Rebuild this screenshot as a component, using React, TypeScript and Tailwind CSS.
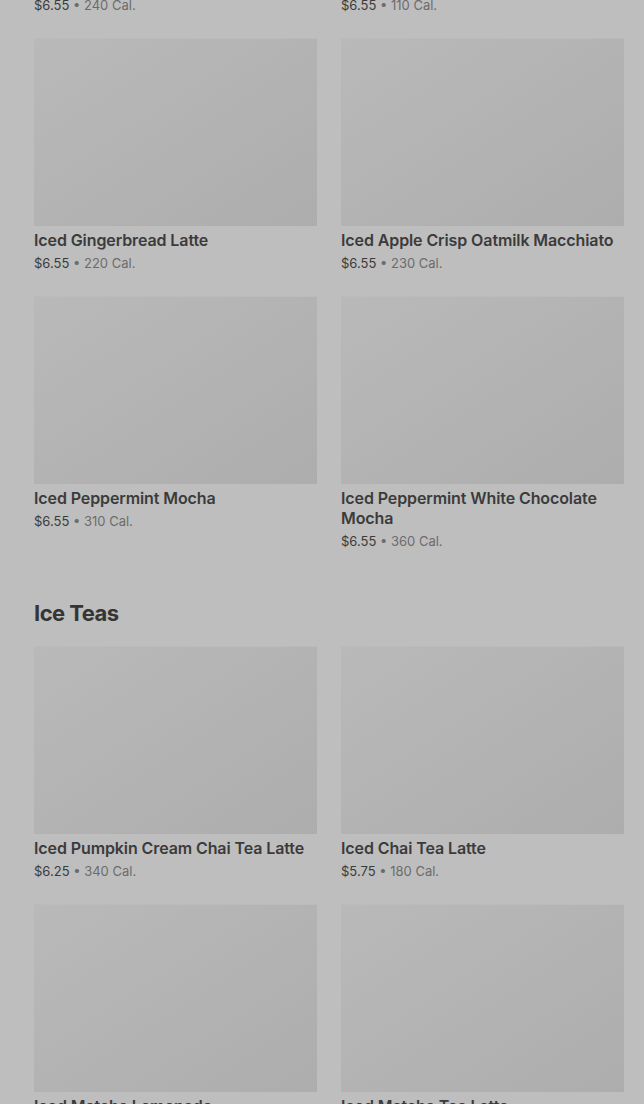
type Item = { name: string; price: string; cal: string };

const seasonal: Item[] = [
  { name: 'Iced Pumpkin Spice Latte', price: '$6.55', cal: '240 Cal.' },
  { name: 'Iced Caramel Brulée Latte', price: '$6.55', cal: '110 Cal.' },
  { name: 'Iced Gingerbread Latte', price: '$6.55', cal: '220 Cal.' },
  { name: 'Iced Apple Crisp Oatmilk Macchiato', price: '$6.55', cal: '230 Cal.' },
  { name: 'Iced Peppermint Mocha', price: '$6.55', cal: '310 Cal.' },
  { name: 'Iced Peppermint White Chocolate Mocha', price: '$6.55', cal: '360 Cal.' },
];

const teas: Item[] = [
  { name: 'Iced Pumpkin Cream Chai Tea Latte', price: '$6.25', cal: '340 Cal.' },
  { name: 'Iced Chai Tea Latte', price: '$5.75', cal: '180 Cal.' },
  { name: 'Iced Matcha Lemonade', price: '$5.25', cal: '100 Cal.' },
  { name: 'Iced Matcha Tea Latte', price: '$5.75', cal: '200 Cal.' },
];

function Card({ item }: { item: Item }) {
  return (
    <div>
      <div className="h-[188px] border-t border-[#bbbbbb] bg-gradient-to-br from-[#b9b9b9] to-[#adadad]" />
      <div className="mt-1 text-[16px] leading-5 font-semibold tracking-[-0.1px] text-[#3b3b3b]">{item.name}</div>
      <div className="mt-1 text-[13px] leading-[18px] text-[#3b3b3b]">
        {item.price}
        <span className="text-[#6c6c6c]"> • {item.cal}</span>
      </div>
    </div>
  );
}

export default function App() {
  return (
    <div
      className="h-[1104px] overflow-hidden bg-[#bebebe] pl-[34px] pr-[20px]"
      style={{ fontFamily: 'Inter, "Noto Sans", sans-serif' }}
    >
      {/* scrolled: previous row sits above the viewport */}
      <div className="mt-[-220px]">
        <div className="grid grid-cols-2 gap-x-6 gap-y-6">
          {seasonal.map((item) => (
            <Card key={item.name} item={item} />
          ))}
        </div>

        <h2 className="mt-[49px] text-[22px] leading-7 font-bold tracking-tight text-[#353535]">Ice Teas</h2>
        <div className="mt-[19px] grid grid-cols-2 gap-x-6 gap-y-6">
          {teas.map((item) => (
            <Card key={item.name} item={item} />
          ))}
        </div>
      </div>
    </div>
  );
}
